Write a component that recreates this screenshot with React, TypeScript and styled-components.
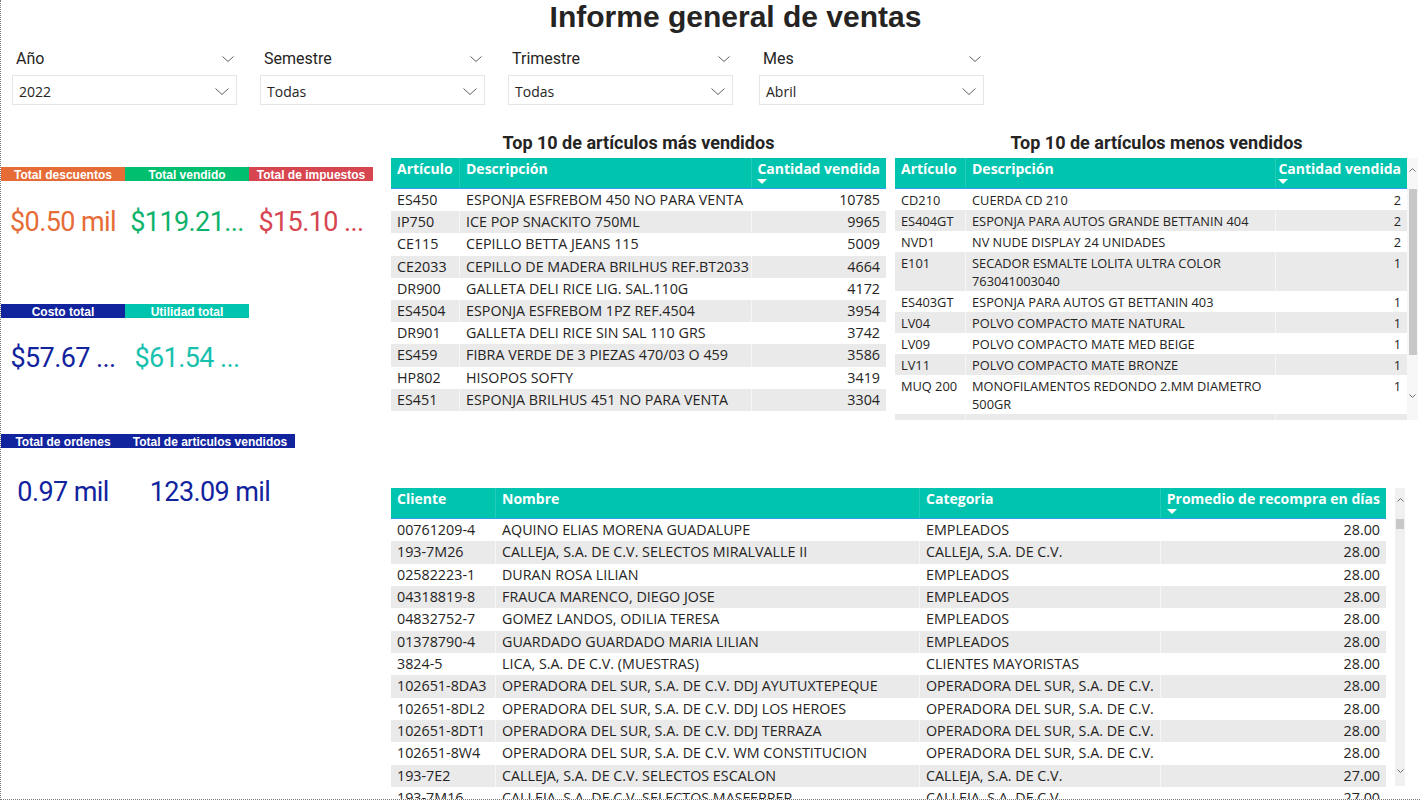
import React from "react";
import styled, { createGlobalStyle } from "styled-components";

const TEAL = "#01c4af";
const BLUE = "#2f9bf2";
const STRIPE = "#eaeaea";
const INK = "#252423";

const GlobalStyle = createGlobalStyle`
  html, body { margin: 0; padding: 0; background: #ffffff; }
  body { font-family: "Open Sans", "Noto Sans", sans-serif; color: ${INK}; }
  * { box-sizing: border-box; }
`;

const Page = styled.div`
  width: 1420px;
  height: 800px;
  border-left: 1px dotted #7a7a7a;
  border-bottom: 1px dotted #7a7a7a;
  overflow: hidden;
  display: flex;
  flex-direction: column;
`;

const Title = styled.h1`
  margin: 0;
  padding-left: 50px;
  text-align: center;
  font-family: "Liberation Sans", Arial, sans-serif;
  font-weight: 700;
  font-size: 30px;
  line-height: 34px;
  color: ${INK};
`;

const SlicerRow = styled.div`
  display: flex;
  gap: 23px;
  padding-left: 11px;
  margin-top: 15px;
`;

const Slicer = styled.div<{ $shift?: number }>`
  width: 225px;
  margin-left: ${(p) => p.$shift ?? 0}px;
  display: flex;
  flex-direction: column;
`;

const SlicerHeader = styled.div`
  height: 20px;
  display: flex;
  align-items: center;
  justify-content: space-between;
  padding: 0 3px 0 4px;
  margin-bottom: 6px;
`;

const SlicerLabel = styled.span`
  font-family: Roboto, sans-serif;
  font-size: 16px;
  line-height: 20px;
  color: ${INK};
`;

const Dropdown = styled.div`
  height: 30px;
  border: 1px solid #e6e6e6;
  display: flex;
  align-items: center;
  justify-content: space-between;
  padding: 2px 7px 0 6px;
`;

const DropdownValue = styled.span`
  font-size: 14px;
  color: ${INK};
`;

const Main = styled.div`
  display: grid;
  grid-template-columns: 390px 1fr;
  margin-top: 25px;
  flex: 1;
  min-height: 0;
`;

const KpiColumn = styled.div`
  padding-top: 37px;
  display: flex;
  flex-direction: column;
`;

const KpiRow = styled.div<{ $h: number }>`
  display: flex;
  height: ${(p) => p.$h}px;
  flex-shrink: 0;
`;

const KpiCard = styled.div<{ $w: number }>`
  width: ${(p) => p.$w}px;
  display: flex;
  flex-direction: column;
`;

const KpiHeader = styled.div<{ $bg: string }>`
  background: ${(p) => p.$bg};
  height: 14px;
  line-height: 16px;
  color: #ffffff;
  font-family: "Liberation Sans", Arial, sans-serif;
  font-weight: 700;
  font-size: 12px;
  text-align: center;
  white-space: nowrap;
  overflow: hidden;
`;

const KpiValue = styled.div<{ $color: string; $offset: number }>`
  margin-top: ${(p) => p.$offset}px;
  color: ${(p) => p.$color};
  font-family: Roboto, sans-serif;
  font-size: 27px;
  letter-spacing: -0.6px;
  line-height: 32px;
  text-align: center;
  white-space: nowrap;
`;

const RightColumn = styled.div`
  display: flex;
  flex-direction: column;
  min-height: 0;
`;

const TopTables = styled.div`
  display: flex;
  gap: 9px;
  height: 290px;
  flex-shrink: 0;
`;

const TableBlock = styled.div<{ $w: number }>`
  width: ${(p) => p.$w}px;
  display: flex;
  flex-direction: column;
`;

const TableTitle = styled.div`
  font-family: Roboto, sans-serif;
  font-weight: 700;
  font-size: 18px;
  line-height: 22px;
  padding-top: 2px;
  height: 28px;
  text-align: center;
  color: ${INK};
`;

const TableFrame = styled.div<{ $h?: number }>`
  display: flex;
  height: ${(p) => (p.$h ? `${p.$h}px` : "auto")};
  overflow: hidden;
  align-items: flex-start;
`;

const Table = styled.div<{ $w: number }>`
  width: ${(p) => p.$w}px;
  flex-shrink: 0;
`;

const HeaderRow = styled.div<{ $cols: string; $h: number }>`
  display: grid;
  grid-template-columns: ${(p) => p.$cols};
  height: ${(p) => p.$h}px;
  background: ${TEAL};
  border-bottom: 1px solid ${BLUE};
`;

const HeaderCell = styled.div<{ $right?: boolean }>`
  padding: 2px 6px 0;
  display: flex;
  justify-content: ${(p) => (p.$right ? "flex-end" : "flex-start")};
  color: #ffffff;
  font-weight: 700;
  font-size: 14px;
  line-height: 18px;
  white-space: nowrap;
  & + & {
    border-left: 1px solid rgba(255, 255, 255, 0.14);
  }
`;

const HeaderLabel = styled.div`
  display: flex;
  flex-direction: column;
  align-items: flex-start;
`;

const SortArrow = styled.span`
  margin-top: 1px;
  width: 0;
  height: 0;
  border-left: 5px solid transparent;
  border-right: 5px solid transparent;
  border-top: 5px solid #ffffff;
`;

const BodyRow = styled.div<{ $cols: string; $striped: boolean; $h?: number }>`
  display: grid;
  grid-template-columns: ${(p) => p.$cols};
  background: ${(p) => (p.$striped ? STRIPE : "#ffffff")};
  ${(p) => (p.$h ? `height: ${p.$h}px;` : "min-height: 21px;")}
`;

const Cell = styled.div<{ $right?: boolean; $small?: boolean }>`
  padding: ${(p) => (p.$small ? "1.5px 6px" : "0 6px")};
  font-size: ${(p) => (p.$small ? "12.8px" : "14.3px")};
  line-height: ${(p) => (p.$small ? "18px" : "22px")};
  text-align: ${(p) => (p.$right ? "right" : "left")};
  color: ${INK};
  white-space: ${(p) => (p.$small ? "normal" : "nowrap")};
  overflow: hidden;
  & + & {
    border-left: 1px solid rgba(255, 255, 255, 0.55);
  }
`;

const Scrollbar = styled.div<{ $w: number; $h: number; $bg: string }>`
  width: ${(p) => p.$w}px;
  height: ${(p) => p.$h}px;
  background: ${(p) => p.$bg};
  display: flex;
  flex-direction: column;
  align-items: center;
  flex-shrink: 0;
`;

const ScrollArrow = styled.div`
  height: 24px;
  display: flex;
  align-items: center;
  justify-content: center;
  flex-shrink: 0;
`;

const ScrollThumb = styled.div<{ $h: number; $w: number }>`
  margin-top: 7px;
  width: ${(p) => p.$w}px;
  height: ${(p) => p.$h}px;
  background: #c8c8c8;
  flex-shrink: 0;
`;

const Spacer = styled.div<{ $fixed?: number }>`
  flex: ${(p) => (p.$fixed !== undefined ? `0 0 ${p.$fixed}px` : "1")};
`;

const BottomBlock = styled.div`
  margin-top: 68px;
  display: flex;
  gap: 9px;
  flex: 1;
  min-height: 0;
  overflow: hidden;
  align-items: flex-start;
`;

const Chevron = ({ w = 13, h = 7, up = false, color = "#605e5c" }: { w?: number; h?: number; up?: boolean; color?: string }) => (
  <svg width={w} height={h} viewBox={`0 0 ${w} ${h}`} fill="none">
    <polyline
      points={up ? `0.5,${h - 0.5} ${w / 2},0.5 ${w - 0.5},${h - 0.5}` : `0.5,0.5 ${w / 2},${h - 0.5} ${w - 0.5},0.5`}
      stroke={color}
      strokeWidth="1"
    />
  </svg>
);

const slicers = [
  { label: "Año", value: "2022", shift: 0 },
  { label: "Semestre", value: "Todas", shift: 0 },
  { label: "Trimestre", value: "Todas", shift: 0 },
  { label: "Mes", value: "Abril", shift: 3 },
];

const kpiRows = [
  {
    h: 137,
    offset: 25,
    cards: [
      { w: 124, title: "Total descuentos", bg: "#e66c37", color: "#e66c37", value: "$0.50 mil" },
      { w: 124, title: "Total vendido", bg: "#00bf6f", color: "#0db36b", value: "$119.21..." },
      { w: 124, title: "Total de impuestos", bg: "#d64550", color: "#d64550", value: "$15.10 ..." },
    ],
  },
  {
    h: 130,
    offset: 24,
    cards: [
      { w: 124, title: "Costo total", bg: "#12239e", color: "#12239e", value: "$57.67 ..." },
      { w: 124, title: "Utilidad total", bg: TEAL, color: "#16c1ad", value: "$61.54 ..." },
    ],
  },
  {
    h: 120,
    offset: 28,
    cards: [
      { w: 124, title: "Total de ordenes", bg: "#12239e", color: "#12239e", value: "0.97 mil" },
      { w: 170, title: "Total de articulos vendidos", bg: "#12239e", color: "#12239e", value: "123.09 mil" },
    ],
  },
];

const topMost = [
  ["ES450", "ESPONJA ESFREBOM 450 NO PARA VENTA", "10785"],
  ["IP750", "ICE POP SNACKITO 750ML", "9965"],
  ["CE115", "CEPILLO BETTA JEANS 115", "5009"],
  ["CE2033", "CEPILLO DE MADERA BRILHUS REF.BT2033", "4664"],
  ["DR900", "GALLETA DELI RICE LIG. SAL.110G", "4172"],
  ["ES4504", "ESPONJA ESFREBOM 1PZ REF.4504", "3954"],
  ["DR901", "GALLETA DELI RICE SIN SAL 110 GRS", "3742"],
  ["ES459", "FIBRA VERDE DE 3 PIEZAS 470/03 O 459", "3586"],
  ["HP802", "HISOPOS SOFTY", "3419"],
  ["ES451", "ESPONJA BRILHUS 451 NO PARA VENTA", "3304"],
];

const topLeast = [
  ["CD210", "CUERDA CD 210", "2"],
  ["ES404GT", "ESPONJA PARA AUTOS GRANDE BETTANIN 404", "2"],
  ["NVD1", "NV NUDE DISPLAY 24 UNIDADES", "2"],
  ["E101", "SECADOR ESMALTE LOLITA ULTRA COLOR 763041003040", "1"],
  ["ES403GT", "ESPONJA PARA AUTOS GT BETTANIN 403", "1"],
  ["LV04", "POLVO COMPACTO MATE NATURAL", "1"],
  ["LV09", "POLVO COMPACTO MATE MED BEIGE", "1"],
  ["LV11", "POLVO COMPACTO MATE BRONZE", "1"],
  ["MUQ 200", "MONOFILAMENTOS REDONDO 2.MM DIAMETRO 500GR", "1"],
  ["", "", ""],
];

const ODS = "OPERADORA DEL SUR, S.A. DE C.V.";
const CAL = "CALLEJA, S.A. DE C.V.";

const clients = [
  ["00761209-4", "AQUINO ELIAS MORENA GUADALUPE", "EMPLEADOS", "28.00"],
  ["193-7M26", "CALLEJA, S.A. DE C.V. SELECTOS MIRALVALLE II", CAL, "28.00"],
  ["02582223-1", "DURAN ROSA LILIAN", "EMPLEADOS", "28.00"],
  ["04318819-8", "FRAUCA MARENCO, DIEGO JOSE", "EMPLEADOS", "28.00"],
  ["04832752-7", "GOMEZ LANDOS, ODILIA TERESA", "EMPLEADOS", "28.00"],
  ["01378790-4", "GUARDADO GUARDADO MARIA LILIAN", "EMPLEADOS", "28.00"],
  ["3824-5", "LICA, S.A. DE C.V. (MUESTRAS)", "CLIENTES MAYORISTAS", "28.00"],
  ["102651-8DA3", "OPERADORA DEL SUR, S.A. DE C.V. DDJ AYUTUXTEPEQUE", ODS, "28.00"],
  ["102651-8DL2", "OPERADORA DEL SUR, S.A. DE C.V. DDJ LOS HEROES", ODS, "28.00"],
  ["102651-8DT1", "OPERADORA DEL SUR, S.A. DE C.V. DDJ TERRAZA", ODS, "28.00"],
  ["102651-8W4", "OPERADORA DEL SUR, S.A. DE C.V. WM CONSTITUCION", ODS, "28.00"],
  ["193-7E2", "CALLEJA, S.A. DE C.V. SELECTOS ESCALON", CAL, "27.00"],
  ["193-7M16", "CALLEJA, S.A. DE C.V. SELECTOS MASFERRER", CAL, "27.00"],
];

const COLS_MOST = "68px 292px 135px";
const COLS_LEAST = "70px 310px 132px";
const COLS_CLIENTS = "104px 424px 241px 226px";

type HeadDef = { label: string; right?: boolean; sorted?: boolean };

const TableHead = ({ cols, h, heads }: { cols: string; h: number; heads: HeadDef[] }) => (
  <HeaderRow $cols={cols} $h={h}>
    {heads.map((hd) => (
      <HeaderCell key={hd.label} $right={hd.right}>
        <HeaderLabel>
          <span>{hd.label}</span>
          {hd.sorted && <SortArrow />}
        </HeaderLabel>
      </HeaderCell>
    ))}
  </HeaderRow>
);

const productHeads: HeadDef[] = [
  { label: "Artículo" },
  { label: "Descripción" },
  { label: "Cantidad vendida", right: true, sorted: true },
];

export default function App() {
  return (
    <>
      <GlobalStyle />
      <Page>
        <Title>Informe general de ventas</Title>
        <SlicerRow>
          {slicers.map((s) => (
            <Slicer key={s.label} $shift={s.shift}>
              <SlicerHeader>
                <SlicerLabel>{s.label}</SlicerLabel>
                <Chevron w={12} h={6} />
              </SlicerHeader>
              <Dropdown>
                <DropdownValue>{s.value}</DropdownValue>
                <Chevron w={14} h={7} />
              </Dropdown>
            </Slicer>
          ))}
        </SlicerRow>
        <Main>
          <KpiColumn>
            {kpiRows.map((row, ri) => (
              <KpiRow key={ri} $h={row.h}>
                {row.cards.map((c) => (
                  <KpiCard key={c.title} $w={c.w}>
                    <KpiHeader $bg={c.bg}>{c.title}</KpiHeader>
                    <KpiValue $color={c.color} $offset={row.offset}>
                      {c.value}
                    </KpiValue>
                  </KpiCard>
                ))}
              </KpiRow>
            ))}
          </KpiColumn>
          <RightColumn>
            <TopTables>
              <TableBlock $w={495}>
                <TableTitle>Top 10 de artículos más vendidos</TableTitle>
                <Table $w={495}>
                  <TableHead cols={COLS_MOST} h={31} heads={productHeads} />
                  {topMost.map((r, i) => (
                    <BodyRow key={r[0]} $cols={COLS_MOST} $striped={i % 2 === 1} $h={22.2}>
                      <Cell>{r[0]}</Cell>
                      <Cell>{r[1]}</Cell>
                      <Cell $right>{r[2]}</Cell>
                    </BodyRow>
                  ))}
                </Table>
              </TableBlock>
              <TableBlock $w={523}>
                <TableTitle>Top 10 de artículos menos vendidos</TableTitle>
                <TableFrame $h={262}>
                  <Table $w={512}>
                    <TableHead cols={COLS_LEAST} h={31} heads={productHeads} />
                    {topLeast.map((r, i) => (
                      <BodyRow key={i} $cols={COLS_LEAST} $striped={i % 2 === 1}>
                        <Cell $small>{r[0]}</Cell>
                        <Cell $small>{r[1]}</Cell>
                        <Cell $small $right>
                          {r[2]}
                        </Cell>
                      </BodyRow>
                    ))}
                  </Table>
                  <Scrollbar $w={11} $h={262} $bg="#f7f7f7">
                    <ScrollArrow>
                      <Chevron w={7} h={4} up color="#707070" />
                    </ScrollArrow>
                    <ScrollThumb $w={8} $h={166} />
                    <Spacer />
                    <ScrollArrow>
                      <Chevron w={7} h={4} color="#707070" />
                    </ScrollArrow>
                    <Spacer $fixed={12} />
                  </Scrollbar>
                </TableFrame>
              </TableBlock>
            </TopTables>
            <BottomBlock>
              <Table $w={995}>
                <TableHead
                  cols={COLS_CLIENTS}
                  h={31}
                  heads={[
                    { label: "Cliente" },
                    { label: "Nombre" },
                    { label: "Categoria" },
                    { label: "Promedio de recompra en días", right: true, sorted: true },
                  ]}
                />
                {clients.map((r, i) => (
                  <BodyRow key={r[0]} $cols={COLS_CLIENTS} $striped={i % 2 === 1} $h={22.35}>
                    <Cell>{r[0]}</Cell>
                    <Cell>{r[1]}</Cell>
                    <Cell>{r[2]}</Cell>
                    <Cell $right>{r[3]}</Cell>
                  </BodyRow>
                ))}
              </Table>
              <Scrollbar $w={10} $h={298} $bg="#f0f0f0">
                <ScrollArrow>
                  <Chevron w={7} h={4} up color="#707070" />
                </ScrollArrow>
                <ScrollThumb $w={8} $h={10} />
                <Spacer />
                <ScrollArrow>
                  <Chevron w={7} h={4} color="#707070" />
                </ScrollArrow>
                <Spacer $fixed={3} />
              </Scrollbar>
            </BottomBlock>
          </RightColumn>
        </Main>
      </Page>
    </>
  );
}
